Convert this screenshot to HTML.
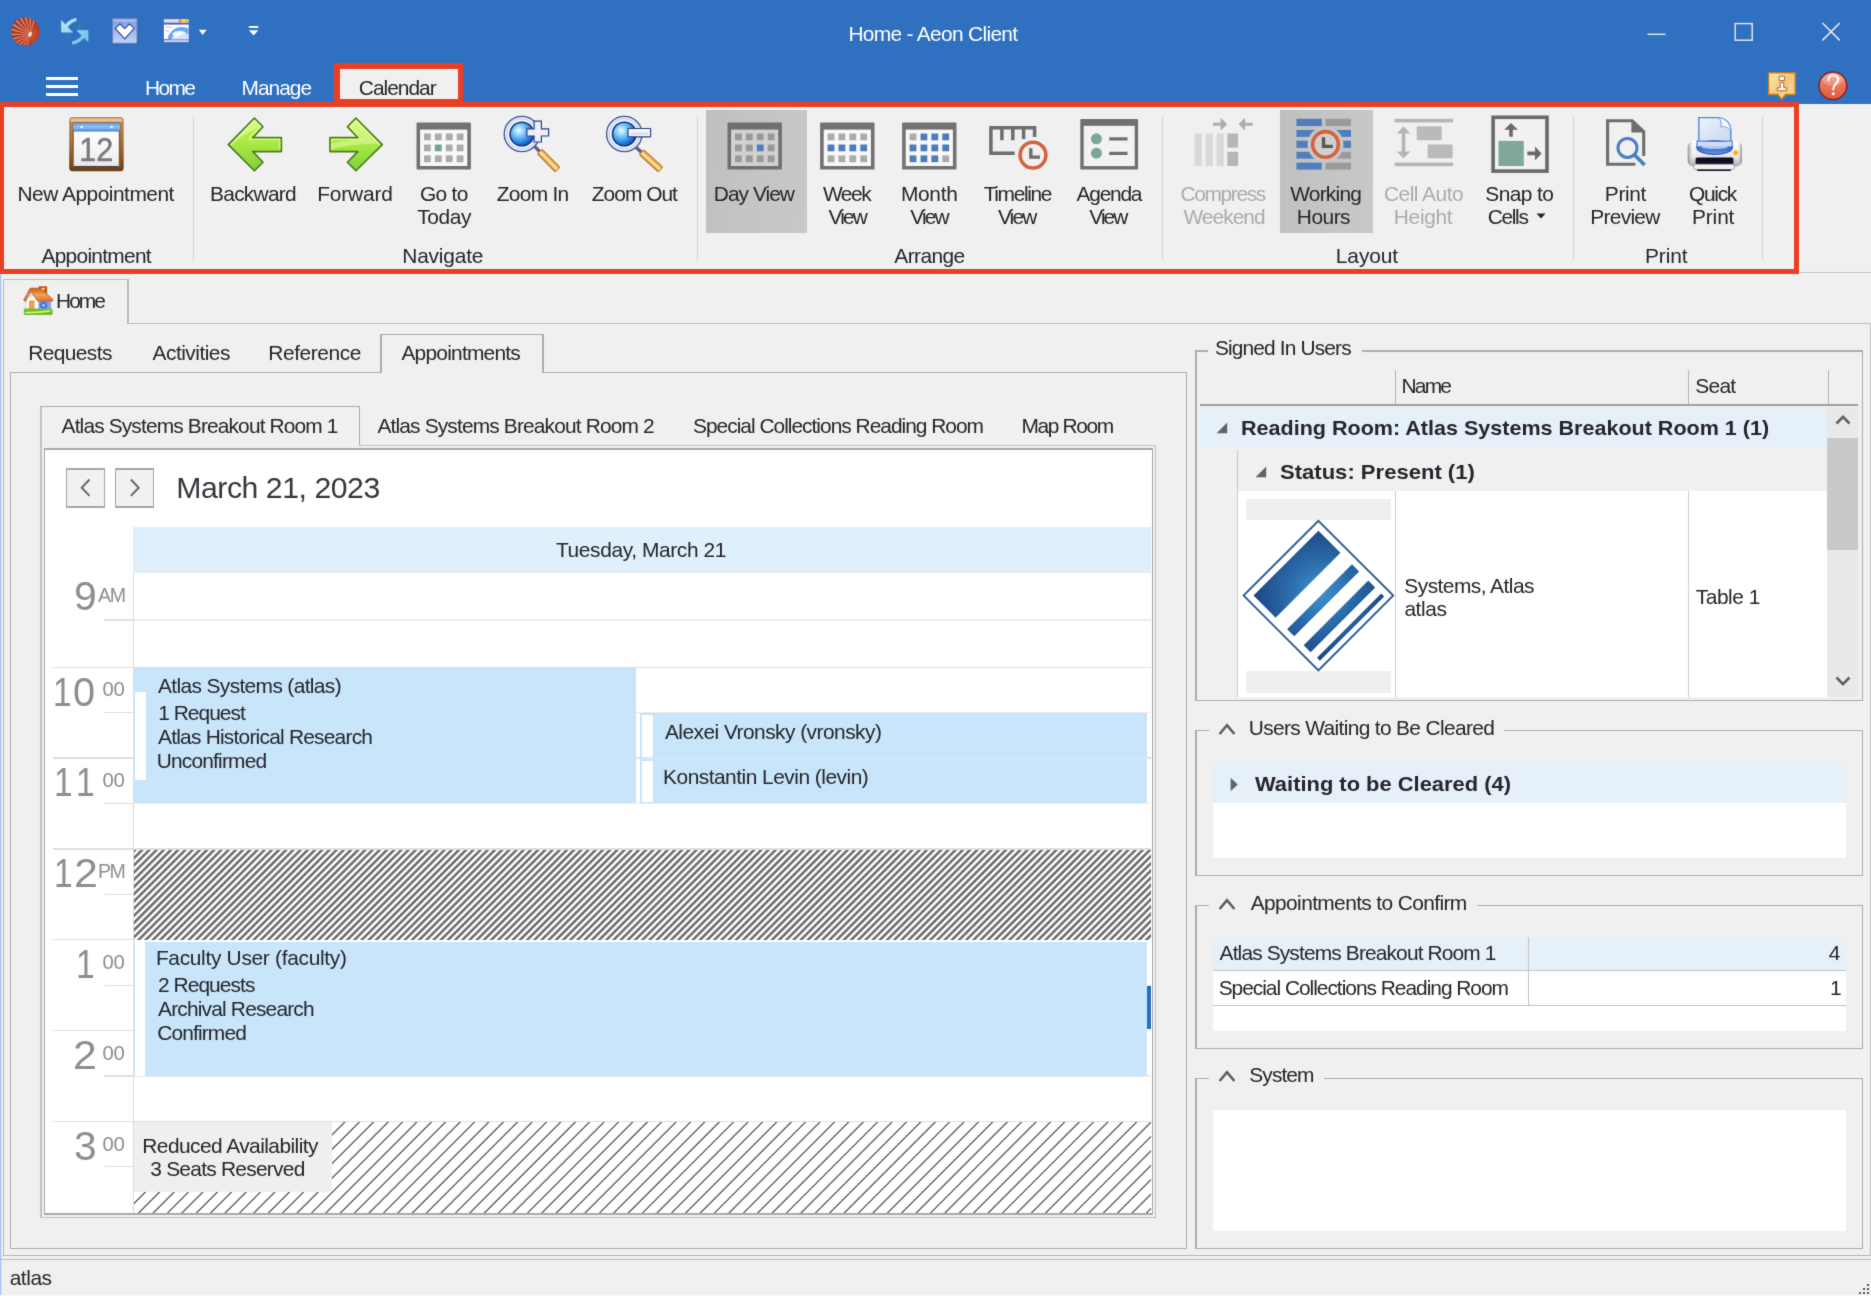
<!DOCTYPE html>
<html lang="en"><head><meta charset="utf-8"><title>Home - Aeon Client</title><style>
html,body{margin:0;padding:0;overflow:hidden}
body{width:1871px;height:1296px;overflow:hidden;position:relative;background:#F0F0F0;font-family:"Liberation Sans",sans-serif;color:#25252B}
#clip{position:absolute;left:0;top:0;width:1871px;height:1296px;overflow:hidden}
#wrap{position:absolute;left:-8px;top:-8px;width:1887px;height:1312px;background:#F0F0F0;filter:url(#soft)}
#pg{position:absolute;left:8px;top:8px;width:1871px;height:1296px}
.a{position:absolute;display:block}
.t{position:absolute;white-space:nowrap}
</style></head>
<body>
<svg width="0" height="0" style="position:absolute"><defs><filter id="soft" x="0" y="0" width="100%" height="100%" color-interpolation-filters="sRGB"><feConvolveMatrix order="3" kernelMatrix="0.0113 0.0838 0.0113 0.0838 0.6196 0.0838 0.0113 0.0838 0.0113" divisor="1" edgeMode="duplicate" preserveAlpha="true"/></filter></defs></svg>
<div id="clip"><div id="wrap"><div id="pg">
<div class="a" style="left:-8px;top:-8px;width:1887px;height:112px;background:#2F70C1;"></div>
<div class="t" style="left:848.39px;top:20.76px;font-size:20.9px;line-height:25px;letter-spacing:-0.67px;color:#FFFFFF;">Home - Aeon Client</div>
<svg class="a" style="left:1640px;top:15px" width="210" height="36" viewBox="0 0 210 36"><path d="M7.5 19.3H25.5" stroke="#E8EAEE" stroke-width="1.4" fill="none"/><rect x="95.2" y="8.6" width="17" height="16.6" stroke="#E8EAEE" stroke-width="1.4" fill="none"/><path d="M182.4 8L199.8 25.4M199.8 8L182.4 25.4" stroke="#E8EAEE" stroke-width="1.5" fill="none"/></svg>
<div class="a" style="left:45.7px;top:77.3px;width:32.5px;height:2.3px;background:#FFFFFF;"></div>
<div class="a" style="left:45.7px;top:85.4px;width:32.5px;height:2.3px;background:#FFFFFF;"></div>
<div class="a" style="left:45.7px;top:93.3px;width:32.5px;height:2.3px;background:#FFFFFF;"></div>
<div class="t" style="left:144.99px;top:75.16px;font-size:20.9px;line-height:25px;letter-spacing:-1.6px;color:#FFFFFF;">Home</div>
<div class="t" style="left:241.49px;top:75.16px;font-size:20.9px;line-height:25px;letter-spacing:-0.97px;color:#FFFFFF;">Manage</div>
<div class="a" style="left:-8px;top:104px;width:1887px;height:168px;background:#F0F0F0;"></div>
<div class="a" style="left:1799px;top:272px;width:80px;height:1px;background:#C6C6C6;"></div>
<div class="a" style="left:334.4px;top:63.4px;width:129.1px;height:43.9px;background:#E93F25;"></div>
<div class="a" style="left:339.6px;top:68.7px;width:118.9px;height:30.7px;background:#F0F0F0;"></div>
<div class="t" style="left:358.84px;top:75.16px;font-size:20.9px;line-height:25px;letter-spacing:-1px;">Calendar</div>
<div class="a" style="left:-8px;top:102.4px;width:1807.4px;height:172px;background:#E93F25;"></div>
<div class="a" style="left:4.3px;top:107.3px;width:1790.1px;height:162px;background:#F0F0F0;"></div>
<div class="a" style="left:705.7px;top:109.9px;width:101.8px;height:123.3px;background:linear-gradient(100deg,#BFBFBF 0%,#C4C4C4 45%,#C8C8C8 100%);"></div>
<div class="a" style="left:1280.3px;top:109.9px;width:92.3px;height:123.3px;background:linear-gradient(100deg,#BFBFBF 0%,#C4C4C4 45%,#C8C8C8 100%);"></div>
<div class="a" style="left:193px;top:115.5px;width:1.3px;height:145px;background:#D6D6D6;"></div>
<div class="a" style="left:696.7px;top:115.5px;width:1.3px;height:145px;background:#D6D6D6;"></div>
<div class="a" style="left:1161.8px;top:115.5px;width:1.3px;height:145px;background:#D6D6D6;"></div>
<div class="a" style="left:1572.8px;top:115.5px;width:1.3px;height:145px;background:#D6D6D6;"></div>
<div class="a" style="left:1761.9px;top:115.5px;width:1.3px;height:145px;background:#D6D6D6;"></div>
<div class="t" style="left:17.49px;top:180.76px;font-size:20.9px;line-height:25px;letter-spacing:-0.49px;">New Appointment</div>
<div class="t" style="left:210.09px;top:180.76px;font-size:20.9px;line-height:25px;letter-spacing:-0.74px;">Backward</div>
<div class="t" style="left:317.29px;top:180.76px;font-size:20.9px;line-height:25px;letter-spacing:-0.18px;">Forward</div>
<div class="t" style="left:419.95px;top:180.76px;font-size:20.9px;line-height:25px;letter-spacing:-0.67px;">Go to</div>
<div class="t" style="left:417.33px;top:204.46px;font-size:20.9px;line-height:25px;letter-spacing:-0.43px;">Today</div>
<div class="t" style="left:496.84px;top:180.76px;font-size:20.9px;line-height:25px;letter-spacing:-0.72px;">Zoom In</div>
<div class="t" style="left:591.84px;top:180.76px;font-size:20.9px;line-height:25px;letter-spacing:-0.98px;">Zoom Out</div>
<div class="t" style="left:713.79px;top:180.76px;font-size:20.9px;line-height:25px;letter-spacing:-0.96px;">Day View</div>
<div class="t" style="left:822.91px;top:180.76px;font-size:20.9px;line-height:25px;letter-spacing:-1.39px;">Week</div>
<div class="t" style="left:828.61px;top:204.46px;font-size:20.9px;line-height:25px;letter-spacing:-1.86px;">View</div>
<div class="t" style="left:900.89px;top:180.76px;font-size:20.9px;line-height:25px;letter-spacing:-0.27px;">Month</div>
<div class="t" style="left:910.21px;top:204.46px;font-size:20.9px;line-height:25px;letter-spacing:-1.86px;">View</div>
<div class="t" style="left:983.73px;top:180.76px;font-size:20.9px;line-height:25px;letter-spacing:-1.37px;">Timeline</div>
<div class="t" style="left:997.91px;top:204.46px;font-size:20.9px;line-height:25px;letter-spacing:-1.86px;">View</div>
<div class="t" style="left:1076.56px;top:180.76px;font-size:20.9px;line-height:25px;letter-spacing:-1.22px;">Agenda</div>
<div class="t" style="left:1089.31px;top:204.46px;font-size:20.9px;line-height:25px;letter-spacing:-1.96px;">View</div>
<div class="t" style="left:1180.44px;top:180.76px;font-size:20.9px;line-height:25px;letter-spacing:-1.33px;color:#ABABAB;">Compress</div>
<div class="t" style="left:1183.41px;top:204.46px;font-size:20.9px;line-height:25px;letter-spacing:-0.94px;color:#ABABAB;">Weekend</div>
<div class="t" style="left:1290.21px;top:180.76px;font-size:20.9px;line-height:25px;letter-spacing:-0.75px;">Working</div>
<div class="t" style="left:1296.79px;top:204.46px;font-size:20.9px;line-height:25px;letter-spacing:-0.49px;">Hours</div>
<div class="t" style="left:1383.94px;top:180.76px;font-size:20.9px;line-height:25px;letter-spacing:-0.5px;color:#ABABAB;">Cell Auto</div>
<div class="t" style="left:1393.79px;top:204.46px;font-size:20.9px;line-height:25px;letter-spacing:-0.3px;color:#ABABAB;">Height</div>
<div class="t" style="left:1485.35px;top:180.76px;font-size:20.9px;line-height:25px;letter-spacing:-0.58px;">Snap to</div>
<div class="t" style="left:1487.84px;top:204.46px;font-size:20.9px;line-height:25px;letter-spacing:-1.36px;">Cells</div>
<svg class="a" style="left:1536px;top:212.5px" width="10" height="6" viewBox="0 0 10 6"><path d="M0.5 0.5H9.5L5 5.5Z" fill="#222"/></svg>
<div class="t" style="left:1604.79px;top:180.76px;font-size:20.9px;line-height:25px;letter-spacing:-0.33px;">Print</div>
<div class="t" style="left:1590.19px;top:204.46px;font-size:20.9px;line-height:25px;letter-spacing:-0.69px;">Preview</div>
<div class="t" style="left:1688.91px;top:180.76px;font-size:20.9px;line-height:25px;letter-spacing:-1.26px;">Quick</div>
<div class="t" style="left:1691.99px;top:204.46px;font-size:20.9px;line-height:25px;letter-spacing:-0.13px;">Print</div>
<div class="t" style="left:41.46px;top:242.86px;font-size:20.9px;line-height:25px;letter-spacing:-0.71px;">Appointment</div>
<div class="t" style="left:402.29px;top:242.86px;font-size:20.9px;line-height:25px;letter-spacing:-0.19px;">Navigate</div>
<div class="t" style="left:894.36px;top:242.86px;font-size:20.9px;line-height:25px;letter-spacing:-0.59px;">Arrange</div>
<div class="t" style="left:1335.79px;top:242.86px;font-size:20.9px;line-height:25px;letter-spacing:-0.07px;">Layout</div>
<div class="t" style="left:1645.09px;top:242.86px;font-size:20.9px;line-height:25px;letter-spacing:-0.15px;">Print</div>
<div class="a" style="left:-8px;top:274.4px;width:9px;height:1029.6px;background:#A4C5EE;"></div>
<div class="a" style="left:1px;top:274.4px;width:1px;height:1029.6px;background:#DCE6F4;"></div>
<div class="a" style="left:128px;top:323px;width:1751px;height:1.4px;background:#BDBDBD;"></div>
<div class="a" style="left:2.6px;top:279px;width:1.3px;height:976.5px;background:#BDBDBD;"></div>
<div class="a" style="left:2.6px;top:279px;width:125.4px;height:1.3px;background:#BDBDBD;"></div>
<div class="a" style="left:127.4px;top:279px;width:1.3px;height:45.2px;background:#BDBDBD;"></div>
<div class="a" style="left:2.6px;top:1255px;width:1876.4px;height:1.4px;background:#B4B4B4;"></div>
<div class="a" style="left:1869.5px;top:323px;width:1.3px;height:933px;background:#BDBDBD;"></div>
<div class="t" style="left:55.99px;top:288.46px;font-size:20.9px;line-height:25px;letter-spacing:-1.93px;">Home</div>
<div class="t" style="left:28.29px;top:340.46px;font-size:20.9px;line-height:25px;letter-spacing:-0.6px;">Requests</div>
<div class="t" style="left:152.56px;top:340.46px;font-size:20.9px;line-height:25px;letter-spacing:-0.51px;">Activities</div>
<div class="t" style="left:268.29px;top:340.46px;font-size:20.9px;line-height:25px;letter-spacing:-0.42px;">Reference</div>
<div class="t" style="left:401.46px;top:340.46px;font-size:20.9px;line-height:25px;letter-spacing:-0.77px;">Appointments</div>
<div class="a" style="left:9.7px;top:372px;width:370.9px;height:1.3px;background:#ADADAD;"></div>
<div class="a" style="left:542.3px;top:372px;width:645.2px;height:1.3px;background:#ADADAD;"></div>
<div class="a" style="left:9.7px;top:372px;width:1.3px;height:877px;background:#ADADAD;"></div>
<div class="a" style="left:1186.2px;top:372px;width:1.3px;height:877px;background:#ADADAD;"></div>
<div class="a" style="left:9.7px;top:1248px;width:1177.8px;height:1.3px;background:#ADADAD;"></div>
<div class="a" style="left:380.3px;top:334px;width:1.3px;height:39px;background:#ADADAD;"></div>
<div class="a" style="left:380.3px;top:334px;width:163.2px;height:1.3px;background:#ADADAD;"></div>
<div class="a" style="left:542.3px;top:334px;width:1.3px;height:39px;background:#ADADAD;"></div>
<div class="t" style="left:61.56px;top:413.26px;font-size:20.9px;line-height:25px;letter-spacing:-0.85px;">Atlas Systems Breakout Room 1</div>
<div class="t" style="left:377.46px;top:413.26px;font-size:20.9px;line-height:25px;letter-spacing:-0.84px;">Atlas Systems Breakout Room 2</div>
<div class="t" style="left:693.05px;top:413.26px;font-size:20.9px;line-height:25px;letter-spacing:-0.99px;">Special Collections Reading Room</div>
<div class="t" style="left:1021.49px;top:413.26px;font-size:20.9px;line-height:25px;letter-spacing:-1.34px;">Map Room</div>
<div class="a" style="left:40.3px;top:405.7px;width:1.3px;height:812.3px;background:#C2C2C2;"></div>
<div class="a" style="left:40.3px;top:405.7px;width:319.7px;height:1.3px;background:#ADADAD;"></div>
<div class="a" style="left:358.8px;top:405.7px;width:1.3px;height:39.8px;background:#ADADAD;"></div>
<div class="a" style="left:358.8px;top:444.6px;width:797.4px;height:1.3px;background:#C2C2C2;"></div>
<div class="a" style="left:1154.9px;top:444.6px;width:1.3px;height:773.4px;background:#C2C2C2;"></div>
<div class="a" style="left:40.3px;top:1216.9px;width:1115.9px;height:1.3px;background:#C2C2C2;"></div>
<div class="a" style="left:43.6px;top:447.7px;width:1109.8px;height:767.1px;background:#A9A9A9;"></div>
<div class="a" style="left:45.3px;top:449.5px;width:1106.3px;height:763.6px;background:#FFFFFF;"></div>
<div class="a" style="left:65.9px;top:468.2px;width:39.4px;height:39.4px;background:#A6A6A6;"></div>
<div class="a" style="left:67.2px;top:469.5px;width:36.8px;height:36.8px;background:#F1F1F1;"></div>
<div class="a" style="left:114.9px;top:468.2px;width:39.4px;height:39.4px;background:#A6A6A6;"></div>
<div class="a" style="left:116.2px;top:469.5px;width:36.8px;height:36.8px;background:#F1F1F1;"></div>
<svg class="a" style="left:65.9px;top:468.2px" width="39.4" height="39.4" viewBox="0 0 39.4 39.4"><path d="M23.5 11.5L15.7 19.7L23.5 27.9" stroke="#6A6A6A" stroke-width="2" fill="none"/></svg>
<svg class="a" style="left:114.9px;top:468.2px" width="39.4" height="39.4" viewBox="0 0 39.4 39.4"><path d="M15.9 11.5L23.7 19.7L15.9 27.9" stroke="#6A6A6A" stroke-width="2" fill="none"/></svg>
<div class="t" style="left:176.32px;top:470.24px;font-size:30.2px;line-height:36px;letter-spacing:-0.45px;color:#36363C;">March 21, 2023</div>
<div class="a" style="left:133.2px;top:526.5px;width:1018px;height:46.3px;background:#DFEFFB;"></div>
<div class="t" style="left:556.03px;top:537.06px;font-size:20.9px;line-height:25px;letter-spacing:-0.38px;">Tuesday, March 21</div>
<div class="a" style="left:53px;top:666.7px;width:1098.4px;height:1.2px;background:#DFDFDF;"></div>
<div class="a" style="left:53px;top:757.4px;width:1098.4px;height:1.2px;background:#DFDFDF;"></div>
<div class="a" style="left:53px;top:848.4px;width:1098.4px;height:1.2px;background:#DFDFDF;"></div>
<div class="a" style="left:53px;top:939.3px;width:1098.4px;height:1.2px;background:#DFDFDF;"></div>
<div class="a" style="left:53px;top:1030px;width:1098.4px;height:1.2px;background:#DFDFDF;"></div>
<div class="a" style="left:53px;top:1120.8px;width:1098.4px;height:1.2px;background:#DFDFDF;"></div>
<div class="a" style="left:104.2px;top:619.4px;width:29px;height:1.25px;background:#DEDEDE;"></div>
<div class="a" style="left:133.2px;top:619.4px;width:1018.2px;height:1.3px;background:#ECECEC;"></div>
<div class="a" style="left:104.2px;top:712.2px;width:29px;height:1.25px;background:#DEDEDE;"></div>
<div class="a" style="left:133.2px;top:712.2px;width:1018.2px;height:1.3px;background:#ECECEC;"></div>
<div class="a" style="left:104.2px;top:802.7px;width:29px;height:1.25px;background:#DEDEDE;"></div>
<div class="a" style="left:133.2px;top:802.7px;width:1018.2px;height:1.3px;background:#ECECEC;"></div>
<div class="a" style="left:104.2px;top:893.5px;width:29px;height:1.25px;background:#DEDEDE;"></div>
<div class="a" style="left:133.2px;top:893.5px;width:1018.2px;height:1.3px;background:#ECECEC;"></div>
<div class="a" style="left:104.2px;top:984.7px;width:29px;height:1.25px;background:#DEDEDE;"></div>
<div class="a" style="left:133.2px;top:984.7px;width:1018.2px;height:1.3px;background:#ECECEC;"></div>
<div class="a" style="left:104.2px;top:1075.4px;width:29px;height:1.25px;background:#DEDEDE;"></div>
<div class="a" style="left:133.2px;top:1075.4px;width:1018.2px;height:1.3px;background:#ECECEC;"></div>
<div class="a" style="left:104.2px;top:1166.2px;width:29px;height:1.25px;background:#DEDEDE;"></div>
<div class="a" style="left:133.2px;top:1166.2px;width:1018.2px;height:1.3px;background:#ECECEC;"></div>
<div class="a" style="left:133.2px;top:572.8px;width:1.3px;height:640.3px;background:#DCDCDC;"></div>
<div class="t" style="left:73.78px;top:571.42px;font-size:41.5px;line-height:50px;transform:scaleX(0.9853);transform-origin:0 0;color:#8E8E8E;">9</div>
<div class="t" style="left:97.96px;top:583.41px;font-size:19.6px;line-height:24px;letter-spacing:-1.34px;color:#8E8E8E;">AM</div>
<div class="t" style="left:53.44px;top:666.52px;font-size:41.5px;line-height:50px;transform:scaleX(0.8098);transform-origin:0 0;color:#8E8E8E;">1</div>
<div class="t" style="left:73.25px;top:666.52px;font-size:41.5px;line-height:50px;transform:scaleX(0.9571);transform-origin:0 0;color:#8E8E8E;">0</div>
<div class="t" style="left:102.51px;top:677.47px;font-size:20.3px;line-height:24px;letter-spacing:-0.28px;color:#8E8E8E;">00</div>
<div class="t" style="left:53.84px;top:757.22px;font-size:41.5px;line-height:50px;transform:scaleX(0.8098);transform-origin:0 0;color:#8E8E8E;">1</div>
<div class="t" style="left:76.24px;top:757.22px;font-size:41.5px;line-height:50px;transform:scaleX(0.8098);transform-origin:0 0;color:#8E8E8E;">1</div>
<div class="t" style="left:102.51px;top:768.17px;font-size:20.3px;line-height:24px;letter-spacing:-0.28px;color:#8E8E8E;">00</div>
<div class="t" style="left:53.64px;top:848.22px;font-size:41.5px;line-height:50px;transform:scaleX(0.8098);transform-origin:0 0;color:#8E8E8E;">1</div>
<div class="t" style="left:73.84px;top:848.22px;font-size:41.5px;line-height:50px;transform:scaleX(1.0360);transform-origin:0 0;color:#8E8E8E;">2</div>
<div class="t" style="left:97.99px;top:859.41px;font-size:19.6px;line-height:24px;letter-spacing:-1.67px;color:#8E8E8E;">PM</div>
<div class="t" style="left:76.24px;top:939.12px;font-size:41.5px;line-height:50px;transform:scaleX(0.8098);transform-origin:0 0;color:#8E8E8E;">1</div>
<div class="t" style="left:102.51px;top:950.07px;font-size:20.3px;line-height:24px;letter-spacing:-0.28px;color:#8E8E8E;">00</div>
<div class="t" style="left:73.15px;top:1029.82px;font-size:41.5px;line-height:50px;transform:scaleX(1.0307);transform-origin:0 0;color:#8E8E8E;">2</div>
<div class="t" style="left:102.51px;top:1040.77px;font-size:20.3px;line-height:24px;letter-spacing:-0.28px;color:#8E8E8E;">00</div>
<div class="t" style="left:73.95px;top:1120.62px;font-size:41.5px;line-height:50px;transform:scaleX(0.9802);transform-origin:0 0;color:#8E8E8E;">3</div>
<div class="t" style="left:102.51px;top:1131.57px;font-size:20.3px;line-height:24px;letter-spacing:-0.28px;color:#8E8E8E;">00</div>
<div class="a" style="left:133.4px;top:668.3px;width:502.9px;height:135.1px;background:#C8E5FA;"></div>
<div class="a" style="left:134.8px;top:691.7px;width:10.8px;height:88.5px;background:#FFFFFF;"></div>
<div class="t" style="left:158.06px;top:673.16px;font-size:20.9px;line-height:25px;letter-spacing:-0.63px;">Atlas Systems (atlas)</div>
<div class="t" style="left:158.21px;top:700.26px;font-size:20.9px;line-height:25px;letter-spacing:-0.96px;">1 Request</div>
<div class="t" style="left:158.06px;top:723.96px;font-size:20.9px;line-height:25px;letter-spacing:-0.77px;">Atlas Historical Research</div>
<div class="t" style="left:156.69px;top:747.56px;font-size:20.9px;line-height:25px;letter-spacing:-0.8px;">Unconfirmed</div>
<div class="a" style="left:640.2px;top:713px;width:507.2px;height:44.7px;background:#C8E5FA;"></div>
<div class="a" style="left:642.3px;top:715.3px;width:10.4px;height:41.5px;background:#FFFFFF;"></div>
<div class="t" style="left:664.96px;top:718.56px;font-size:20.9px;line-height:25px;letter-spacing:-0.53px;">Alexei Vronsky (vronsky)</div>
<div class="a" style="left:640.2px;top:757.7px;width:507.2px;height:1.2px;background:#D9ECFB;"></div>
<div class="a" style="left:640.2px;top:758.9px;width:507.2px;height:44.5px;background:#C8E5FA;"></div>
<div class="a" style="left:642.3px;top:760.6px;width:10.4px;height:41px;background:#FFFFFF;"></div>
<div class="t" style="left:663.09px;top:763.96px;font-size:20.9px;line-height:25px;letter-spacing:-0.5px;">Konstantin Levin (levin)</div>
<div class="a" style="left:134.4px;top:849.6px;width:1017px;height:90.4px;background:repeating-linear-gradient(135deg,#6C6C6C 0,#6C6C6C 1.25px,#FFFFFF 2.55px,#FFFFFF 3.8px,#6C6C6C 5.09px);"></div>
<div class="a" style="left:133.4px;top:941.7px;width:1014px;height:134.8px;background:#C8E5FA;"></div>
<div class="a" style="left:134.8px;top:941.7px;width:10.6px;height:134.8px;background:#FFFFFF;"></div>
<div class="a" style="left:1146.6px;top:985.5px;width:4.8px;height:43.8px;background:#2C6CC0;"></div>
<div class="t" style="left:155.89px;top:945.26px;font-size:20.9px;line-height:25px;letter-spacing:-0.3px;">Faculty User (faculty)</div>
<div class="t" style="left:157.95px;top:972.26px;font-size:20.9px;line-height:25px;letter-spacing:-0.92px;">2 Requests</div>
<div class="t" style="left:158.06px;top:995.86px;font-size:20.9px;line-height:25px;letter-spacing:-0.81px;">Archival Research</div>
<div class="t" style="left:157.24px;top:1019.66px;font-size:20.9px;line-height:25px;letter-spacing:-0.85px;">Confirmed</div>
<div class="a" style="left:134.4px;top:1122.2px;width:1017px;height:90.9px;background:repeating-linear-gradient(135deg,#FFFFFF 0,#FFFFFF 5.6px,#727272 6.1px,#727272 7.15px,#FFFFFF 7.58px,#FFFFFF 10.18px);"></div>
<div class="a" style="left:134.4px;top:1122.2px;width:197.9px;height:70.1px;background:#EFEFEF;"></div>
<div class="t" style="left:142.29px;top:1132.76px;font-size:20.9px;line-height:25px;letter-spacing:-0.55px;">Reduced Availability</div>
<div class="t" style="left:150.2px;top:1156.46px;font-size:20.9px;line-height:25px;letter-spacing:-0.73px;">3 Seats Reserved</div>
<div class="a" style="left:1195.3px;top:350.4px;width:1.3px;height:351px;background:#ADADAD;"></div>
<div class="a" style="left:1862.1px;top:350.4px;width:1.3px;height:351px;background:#ADADAD;"></div>
<div class="a" style="left:1195.3px;top:700.1px;width:668.1px;height:1.3px;background:#ADADAD;"></div>
<div class="a" style="left:1195.3px;top:350.4px;width:13.2px;height:1.3px;background:#ADADAD;"></div>
<div class="a" style="left:1362px;top:350.4px;width:501.4px;height:1.3px;background:#ADADAD;"></div>
<div class="t" style="left:1214.95px;top:335.26px;font-size:20.9px;line-height:25px;letter-spacing:-0.85px;">Signed In Users</div>
<div class="a" style="left:1395.2px;top:369.6px;width:1.3px;height:35.4px;background:#B4B4B4;"></div>
<div class="a" style="left:1687.6px;top:369.6px;width:1.3px;height:35.4px;background:#B4B4B4;"></div>
<div class="a" style="left:1827.8px;top:369.6px;width:1.3px;height:35.4px;background:#B4B4B4;"></div>
<div class="a" style="left:1200.2px;top:404.2px;width:658.2px;height:1.6px;background:#A0A0A0;"></div>
<div class="t" style="left:1401.49px;top:373.46px;font-size:20.9px;line-height:25px;letter-spacing:-1.76px;">Name</div>
<div class="t" style="left:1695.35px;top:373.46px;font-size:20.9px;line-height:25px;letter-spacing:-0.76px;">Seat</div>
<div class="a" style="left:1200.2px;top:406.6px;width:627.1px;height:40.8px;background:#E6F0F9;"></div>
<svg class="a" style="left:1216.4px;top:422.2px" width="12" height="12" viewBox="0 0 12 12"><path d="M11.2 0.6V11.2H0.6Z" fill="#636363"/></svg>
<div class="t" style="left:1241.16px;top:414.96px;font-size:20.6px;line-height:25px;transform:scaleX(1.0457);transform-origin:0 0;font-weight:bold;">Reading Room: Atlas Systems Breakout Room 1 (1)</div>
<div class="a" style="left:1237px;top:449.5px;width:1.3px;height:247.3px;background:#C9C9C9;"></div>
<svg class="a" style="left:1254.9px;top:465.8px" width="12" height="12" viewBox="0 0 12 12"><path d="M11.2 0.6V11.2H0.6Z" fill="#636363"/></svg>
<div class="t" style="left:1279.56px;top:458.56px;font-size:20.6px;line-height:25px;transform:scaleX(1.0707);transform-origin:0 0;font-weight:bold;">Status: Present (1)</div>
<div class="a" style="left:1238.3px;top:491.4px;width:589px;height:205.4px;background:#FFFFFF;"></div>
<div class="a" style="left:1395.2px;top:491.4px;width:1.3px;height:205.4px;background:#D0D0D0;"></div>
<div class="a" style="left:1687.6px;top:491.4px;width:1.3px;height:205.4px;background:#D0D0D0;"></div>
<div class="a" style="left:1246px;top:498.8px;width:144.7px;height:21.7px;background:#EFEFEF;"></div>
<div class="a" style="left:1246px;top:670.8px;width:144.7px;height:22.4px;background:#EFEFEF;"></div>
<div class="t" style="left:1404.35px;top:572.96px;font-size:20.9px;line-height:25px;letter-spacing:-0.53px;">Systems, Atlas</div>
<div class="t" style="left:1404.41px;top:596.46px;font-size:20.9px;line-height:25px;letter-spacing:-0.4px;">atlas</div>
<div class="t" style="left:1695.83px;top:584.36px;font-size:20.9px;line-height:25px;letter-spacing:-0.48px;">Table 1</div>
<div class="a" style="left:1827.3px;top:406.6px;width:31.1px;height:290.2px;background:#E9E9E9;"></div>
<div class="a" style="left:1827.3px;top:437.6px;width:31.1px;height:112.8px;background:#C9C9C9;"></div>
<svg class="a" style="left:1835px;top:414px" width="16" height="12" viewBox="0 0 16 12"><path d="M1.5 9.5L8 2.8L14.5 9.5" stroke="#5F5F5F" stroke-width="2.6" fill="none"/></svg>
<svg class="a" style="left:1835px;top:675px" width="16" height="12" viewBox="0 0 16 12"><path d="M1.5 2.5L8 9.2L14.5 2.5" stroke="#5F5F5F" stroke-width="2.6" fill="none"/></svg>
<div class="a" style="left:1195.3px;top:730px;width:1.3px;height:146.2px;background:#ADADAD;"></div>
<div class="a" style="left:1862.1px;top:730px;width:1.3px;height:146.2px;background:#ADADAD;"></div>
<div class="a" style="left:1195.3px;top:874.9px;width:668.1px;height:1.3px;background:#ADADAD;"></div>
<div class="a" style="left:1195.3px;top:730px;width:13.4px;height:1.3px;background:#ADADAD;"></div>
<div class="a" style="left:1504.4px;top:730px;width:359px;height:1.3px;background:#ADADAD;"></div>
<svg class="a" style="left:1217.5px;top:721.8px" width="18" height="14" viewBox="0 0 18 14"><path d="M1.6 12L9 3.2L16.4 12" stroke="#5F5F5F" stroke-width="2.6" fill="none"/></svg>
<div class="t" style="left:1248.69px;top:715.46px;font-size:20.9px;line-height:25px;letter-spacing:-0.64px;">Users Waiting to Be Cleared</div>
<div class="a" style="left:1213px;top:762.3px;width:632.7px;height:95.9px;background:#FFFFFF;"></div>
<div class="a" style="left:1213px;top:762.3px;width:632.7px;height:40.9px;background:#E6F0F9;"></div>
<svg class="a" style="left:1230.4px;top:777px" width="9" height="15" viewBox="0 0 9 15"><path d="M0.6 0.8L7.8 7.5L0.6 14.2Z" fill="#636363"/></svg>
<div class="t" style="left:1255.38px;top:771.36px;font-size:20.6px;line-height:25px;transform:scaleX(1.0637);transform-origin:0 0;font-weight:bold;">Waiting to be Cleared (4)</div>
<div class="a" style="left:1195.3px;top:904.8px;width:1.3px;height:144.2px;background:#ADADAD;"></div>
<div class="a" style="left:1862.1px;top:904.8px;width:1.3px;height:144.2px;background:#ADADAD;"></div>
<div class="a" style="left:1195.3px;top:1047.7px;width:668.1px;height:1.3px;background:#ADADAD;"></div>
<div class="a" style="left:1195.3px;top:904.8px;width:13.4px;height:1.3px;background:#ADADAD;"></div>
<div class="a" style="left:1476.7px;top:904.8px;width:386.7px;height:1.3px;background:#ADADAD;"></div>
<svg class="a" style="left:1217.5px;top:896.6px" width="18" height="14" viewBox="0 0 18 14"><path d="M1.6 12L9 3.2L16.4 12" stroke="#5F5F5F" stroke-width="2.6" fill="none"/></svg>
<div class="t" style="left:1250.76px;top:889.96px;font-size:20.9px;line-height:25px;letter-spacing:-0.61px;">Appointments to Confirm</div>
<div class="a" style="left:1213px;top:937.2px;width:632.7px;height:94px;background:#FFFFFF;"></div>
<div class="a" style="left:1213px;top:937.2px;width:632.7px;height:32.8px;background:#E6F0F9;"></div>
<div class="a" style="left:1213px;top:970px;width:632.7px;height:1.4px;background:#C4C4C4;"></div>
<div class="a" style="left:1213px;top:1004.5px;width:632.7px;height:1.4px;background:#C4C4C4;"></div>
<div class="a" style="left:1528px;top:937.2px;width:1.3px;height:68.3px;background:#C4C4C4;"></div>
<div class="t" style="left:1219.56px;top:940.26px;font-size:20.9px;line-height:25px;letter-spacing:-0.85px;">Atlas Systems Breakout Room 1</div>
<div class="t" style="left:1218.65px;top:974.86px;font-size:20.9px;line-height:25px;letter-spacing:-1.01px;">Special Collections Reading Room</div>
<div class="t" style="left:1828.72px;top:940.26px;font-size:20.9px;line-height:25px;">4</div>
<div class="t" style="left:1829.91px;top:974.86px;font-size:20.9px;line-height:25px;">1</div>
<div class="a" style="left:1195.3px;top:1077.6px;width:1.3px;height:171.4px;background:#ADADAD;"></div>
<div class="a" style="left:1862.1px;top:1077.6px;width:1.3px;height:171.4px;background:#ADADAD;"></div>
<div class="a" style="left:1195.3px;top:1247.7px;width:668.1px;height:1.3px;background:#ADADAD;"></div>
<div class="a" style="left:1195.3px;top:1077.6px;width:13.4px;height:1.3px;background:#ADADAD;"></div>
<div class="a" style="left:1324px;top:1077.6px;width:539.4px;height:1.3px;background:#ADADAD;"></div>
<svg class="a" style="left:1217.5px;top:1069.4px" width="18" height="14" viewBox="0 0 18 14"><path d="M1.6 12L9 3.2L16.4 12" stroke="#5F5F5F" stroke-width="2.6" fill="none"/></svg>
<div class="t" style="left:1249.35px;top:1062.26px;font-size:20.9px;line-height:25px;letter-spacing:-0.91px;">System</div>
<div class="a" style="left:1213px;top:1110px;width:632.7px;height:121.4px;background:#FFFFFF;"></div>
<div class="a" style="left:-8px;top:1259px;width:1887px;height:1.3px;background:#BDBDBD;"></div>
<div class="t" style="left:9.71px;top:1264.96px;font-size:20.9px;line-height:25px;letter-spacing:-0.45px;">atlas</div>
<div class="a" style="left:-8px;top:1294.6px;width:1887px;height:9.4px;background:#FAFAFA;"></div>
<svg class="a" style="left:1858px;top:1283px" width="12" height="12" viewBox="0 0 12 12"><rect x="9" y="1" width="2" height="2" fill="#5A5A5A"/><rect x="5" y="5" width="2" height="2" fill="#5A5A5A"/><rect x="9" y="5" width="2" height="2" fill="#5A5A5A"/><rect x="1" y="9" width="2" height="2" fill="#5A5A5A"/><rect x="5" y="9" width="2" height="2" fill="#5A5A5A"/><rect x="9" y="9" width="2" height="2" fill="#5A5A5A"/></svg>
<svg class="a" style="left:0;top:0" width="1871" height="330" viewBox="0 0 1871 330"><defs><radialGradient id="gApp" cx="0.66" cy="0.6" r="0.75"><stop offset="0" stop-color="#CC5236"/><stop offset="0.5" stop-color="#B53E23"/><stop offset="1" stop-color="#A8361D"/></radialGradient><linearGradient id="gHeart" x1="0" y1="0" x2="0" y2="1"><stop offset="0" stop-color="#7C9BE6"/><stop offset="1" stop-color="#BFD3F8"/></linearGradient><linearGradient id="gBrown" x1="0" y1="0" x2="0" y2="1"><stop offset="0" stop-color="#B98F60"/><stop offset="0.5" stop-color="#A0703C"/><stop offset="1" stop-color="#6A3C14"/></linearGradient><linearGradient id="gCalBlue" x1="0" y1="0" x2="0" y2="1"><stop offset="0" stop-color="#5B9AE4"/><stop offset="0.45" stop-color="#8FBDF2"/><stop offset="0.8" stop-color="#6EA6E6"/><stop offset="1" stop-color="#3B78BE"/></linearGradient><linearGradient id="gPage" x1="0" y1="0" x2="0" y2="1"><stop offset="0" stop-color="#FFFFFF"/><stop offset="0.8" stop-color="#F0F0F0"/><stop offset="1" stop-color="#E4E4E4"/></linearGradient><linearGradient id="gGreen" x1="0" y1="0" x2="0" y2="1"><stop offset="0" stop-color="#C9F452"/><stop offset="0.5" stop-color="#A9E844"/><stop offset="1" stop-color="#7ED03A"/></linearGradient><radialGradient id="gLens" cx="0.36" cy="0.34" r="0.75"><stop offset="0" stop-color="#F2FCFF"/><stop offset="0.3" stop-color="#8AD2FA"/><stop offset="0.7" stop-color="#2E8CE6"/><stop offset="1" stop-color="#0F4AA8"/></radialGradient><linearGradient id="gHandle" x1="0" y1="0" x2="1" y2="0"><stop offset="0" stop-color="#C8771A"/><stop offset="0.45" stop-color="#FFE9B0"/><stop offset="1" stop-color="#E08A1E"/></linearGradient><linearGradient id="gInfo" x1="0" y1="0" x2="1" y2="1"><stop offset="0" stop-color="#FFF0B8"/><stop offset="0.5" stop-color="#F3C67E"/><stop offset="1" stop-color="#F8DA9A"/></linearGradient><linearGradient id="gHelp" x1="0" y1="0" x2="0" y2="1"><stop offset="0" stop-color="#F4A48E"/><stop offset="0.5" stop-color="#E9755A"/><stop offset="1" stop-color="#E0573A"/></linearGradient><linearGradient id="gPaper" x1="0" y1="0" x2="1" y2="1"><stop offset="0" stop-color="#EEF3FB"/><stop offset="1" stop-color="#C6D6EE"/></linearGradient><linearGradient id="gPrn" x1="0" y1="0" x2="0" y2="1"><stop offset="0" stop-color="#FFFFFF"/><stop offset="0.6" stop-color="#E6E6E6"/><stop offset="1" stop-color="#9A9A9A"/></linearGradient><linearGradient id="gTray" x1="0" y1="0" x2="0" y2="1"><stop offset="0" stop-color="#6F9FE6"/><stop offset="0.45" stop-color="#2C62C8"/><stop offset="1" stop-color="#6C9CE4"/></linearGradient><linearGradient id="gRoof" x1="0" y1="0" x2="0" y2="1"><stop offset="0" stop-color="#C95A1A"/><stop offset="0.5" stop-color="#F2A25A"/><stop offset="1" stop-color="#D9702A"/></linearGradient><linearGradient id="gRefresh" gradientUnits="userSpaceOnUse" x1="61" y1="19" x2="88" y2="44"><stop offset="0" stop-color="#BFEAFB"/><stop offset="1" stop-color="#62BCE8"/></linearGradient><linearGradient id="gPrnSide" x1="0" y1="0" x2="1" y2="0"><stop offset="0" stop-color="#6E6E6E" stop-opacity="0.75"/><stop offset="0.1" stop-color="#FFFFFF" stop-opacity="0.2"/><stop offset="0.22" stop-color="#FFFFFF" stop-opacity="0"/><stop offset="0.8" stop-color="#FFFFFF" stop-opacity="0"/><stop offset="0.92" stop-color="#FFFFFF" stop-opacity="0.2"/><stop offset="1" stop-color="#6E6E6E" stop-opacity="0.75"/></linearGradient><clipPath id="cApp"><circle cx="25.4" cy="31.6" r="14"/></clipPath><filter id="fB" x="-20%" y="-20%" width="140%" height="140%"><feGaussianBlur stdDeviation="0.45"/></filter><clipPath id="cWin"><rect x="163.9" y="24.6" width="24.8" height="14.6"/></clipPath><clipPath id="cArr1"><path d="M228.3 144.6L254.4 118L263 126.8L252.8 137.6L281.4 137.6L281.4 151.6L252.8 151.6L263 162.2L254.4 170.8Z"/></clipPath><clipPath id="cArr2"><path d="M382.3 144.6L355.9 118L347.4 126.8L357.8 137.6L330 137.6L330 151.6L357.8 151.6L347.4 162.2L355.9 170.8Z"/></clipPath></defs><circle cx="25.4" cy="31.6" r="14.2" fill="url(#gApp)"/><path d="M30.2 34.4L24.62 59.79L22.34 59.18ZM30.2 34.4L18.23 57.48L16.19 56.3ZM30.2 34.4L12.67 53.6L11 51.93ZM30.2 34.4L8.3 48.41L7.12 46.37ZM30.2 34.4L5.42 42.26L4.81 39.98ZM30.2 34.4L4.23 35.58L4.23 33.22ZM30.2 34.4L4.81 28.82L5.42 26.54ZM30.2 34.4L7.12 22.43L8.3 20.39ZM30.2 34.4L11 16.87L12.67 15.2ZM30.2 34.4L16.19 12.5L18.23 11.32ZM30.2 34.4L22.34 9.62L24.62 9.01ZM30.2 34.4L29.02 8.43L31.38 8.43ZM30.2 34.4L35.78 9.01L38.06 9.62Z" fill="#F6C3B2" clip-path="url(#cApp)" opacity="0.62" filter="url(#fB)"/><ellipse cx="30.1" cy="34.3" rx="1.5" ry="2.7" fill="#FFF1EA" transform="rotate(22 30.1 34.3)" filter="url(#fB)"/><path d="M77.6 24.6C79.6 26.4 80.4 28.6 80.2 30.4M70.2 38.2C68.6 36.6 68 34.6 68.4 32.8" fill="none" stroke="#2F86B0" stroke-width="2.2" opacity="0.8"/><path d="M64.6 29.4C66.6 24.4 70.6 20.8 76.4 19.4" fill="none" stroke="url(#gRefresh)" stroke-width="3.4"/><path d="M61.4 20.4V32.2H72.6Z" fill="url(#gRefresh)" stroke="#A6E0F7" stroke-width="0.5"/><path d="M84.8 33.2C82.8 38.2 78.4 42 72.2 43.2" fill="none" stroke="url(#gRefresh)" stroke-width="3.4"/><path d="M88 41.4V30.4H76.8Z" fill="url(#gRefresh)" stroke="#A6E0F7" stroke-width="0.5"/><rect x="112.6" y="18.8" width="25.7" height="25.7" fill="#3C4A7A" rx="1" opacity="0.55"/><rect x="111.9" y="18.1" width="25.8" height="25.8" fill="#6C80BC" rx="1"/><rect x="113.1" y="19.3" width="23.4" height="23.4" fill="url(#gHeart)"/><rect x="113.1" y="19.3" width="23.4" height="2.3" fill="#B4C6F4" opacity="0.8"/><path d="M115.2 28.4L119.9 23.9L124.7 28.6L129.5 23.9L134.3 28.4L124.7 38.8Z" fill="#FFFFFF" stroke="#2C3F94" stroke-width="1.1" stroke-linejoin="round"/><rect x="162.8" y="18.1" width="27" height="25.1" fill="#4F66B2" rx="1"/><rect x="163.9" y="19.2" width="24.8" height="3.4" fill="#DCE3F6"/><rect x="178.6" y="19.2" width="3" height="3.4" fill="#E8806A"/><rect x="181.9" y="19.2" width="3" height="3.4" fill="#E9D83A"/><rect x="185.2" y="19.2" width="3" height="3.4" fill="#B6D832"/><rect x="163.9" y="24.6" width="24.8" height="14.6" fill="#FFFFFF"/><circle cx="182" cy="42" r="15" fill="#6EA5F2" clip-path="url(#cWin)"/><circle cx="181.5" cy="42.5" r="10.5" fill="#CFE3FC" clip-path="url(#cWin)"/><path d="M172 34C175 30.5 181 29.5 186 32.5C183 33 179 36.5 176 38Z" fill="#FFFFFF" clip-path="url(#cWin)" opacity="0.85"/><rect x="165.8" y="26.6" width="6.8" height="1.4" fill="#C9D3EA"/><rect x="165.8" y="30" width="3.2" height="1.4" fill="#C9D3EA"/><rect x="163.9" y="40.2" width="24.8" height="1.9" fill="#CBD8F7"/><path d="M198.8 29.8H206.6L202.7 34.9Z" fill="#FFFFFF"/><rect x="248.9" y="26" width="9.4" height="1.9" fill="#FFFFFF"/><path d="M248.9 30.2H258.3L253.6 35.6Z" fill="#FFFFFF"/><path d="M1768.6 72.7H1795.2V94.5H1785.6L1781.7 99.4L1777.8 94.5H1768.6Z" fill="url(#gInfo)" stroke="#C67C1C" stroke-width="1.4" stroke-linejoin="round"/><path d="M1779.2 76.2H1784.6V80.6H1779.2ZM1780.2 82.6H1783.8V87.8H1786.6V90.8H1777.4V87.8H1780.2Z" fill="#FFFFFF" stroke="#A96A2A" stroke-width="1"/><circle cx="1832.9" cy="85.8" r="13.8" fill="url(#gHelp)" stroke="#8E1C14" stroke-width="1.4"/><ellipse cx="1832.9" cy="79.5" rx="10.5" ry="6.5" fill="#FFFFFF" opacity="0.18"/><path d="M1828.4 80.4C1828.6 76.6 1831 75.2 1833.4 75.2C1836.4 75.2 1838.2 77.2 1838.2 79.6C1838.2 83.2 1833.2 84.4 1833.2 89.4" fill="none" stroke="#FFFFFF" stroke-width="2.1" stroke-linecap="round"/><circle cx="1833.2" cy="93.8" r="1.5" fill="#FFFFFF"/><rect x="69.2" y="117" width="54.5" height="54.3" fill="url(#gBrown)" rx="3.5"/><rect x="70.6" y="118.6" width="51.7" height="3.2" fill="#EEC08E" rx="1.5"/><rect x="72.6" y="122.2" width="47.8" height="45.4" fill="#8A5A28" rx="2"/><rect x="73.8" y="131" width="45" height="35.4" fill="url(#gPage)"/><rect x="73" y="122.7" width="47" height="8.7" fill="url(#gCalBlue)" rx="1.5"/><rect x="73.8" y="166" width="45" height="1.3" fill="#3F3F3F"/><circle cx="81.6" cy="127" r="1.3" fill="#FFFFFF"/><circle cx="111.6" cy="127" r="1.3" fill="#FFFFFF"/><text x="79.2" y="160.5" font-family="Liberation Sans,sans-serif" font-size="33.4" textLength="34" lengthAdjust="spacingAndGlyphs" fill="#7B7B7B" stroke="#7B7B7B" stroke-width="0.5">12</text><path d="M228.3 144.6L254.4 118L263 126.8L252.8 137.6L281.4 137.6L281.4 151.6L252.8 151.6L263 162.2L254.4 170.8Z" fill="url(#gGreen)"/><path d="M226 146C236 142 246 131 262 127L256 112L222 140Z" fill="#F4FFC4" clip-path="url(#cArr1)" opacity="0.42"/><path d="M228.3 144.6L254.4 118L263 126.8L252.8 137.6L281.4 137.6L281.4 151.6L252.8 151.6L263 162.2L254.4 170.8Z" fill="none" stroke="#4B7A1E" stroke-width="1.6" stroke-linejoin="round"/><path d="M231.2 144.6L254.4 120.8L260.2 126.8L249 138.4M249 139.4H279.8V149.8" fill="none" stroke="#E6FFA6" stroke-width="1.1" opacity="0.8" stroke-linejoin="round"/><path d="M382.3 144.6L355.9 118L347.4 126.8L357.8 137.6L330 137.6L330 151.6L357.8 151.6L347.4 162.2L355.9 170.8Z" fill="url(#gGreen)"/><path d="M328 146C338 140 352 141 362 138L348 126L356 114L386 144C376 142 340 146 328 150Z" fill="#F4FFC4" clip-path="url(#cArr2)" opacity="0.42"/><path d="M382.3 144.6L355.9 118L347.4 126.8L357.8 137.6L330 137.6L330 151.6L357.8 151.6L347.4 162.2L355.9 170.8Z" fill="none" stroke="#4B7A1E" stroke-width="1.6" stroke-linejoin="round"/><path d="M331.8 149.8V139.4H361.4L350.2 126.8L355.9 120.8L379.4 144.6" fill="none" stroke="#E6FFA6" stroke-width="1.1" opacity="0.8" stroke-linejoin="round"/><rect x="416.5" y="122.4" width="54.4" height="47.2" fill="#727272" rx="1.2"/><rect x="420.1" y="129.6" width="47.2" height="36.4" fill="#F8F8F8"/><rect x="424" y="133.5" width="6.8" height="6.8" fill="#ABABAB"/><rect x="434.9" y="133.5" width="6.8" height="6.8" fill="#ABABAB"/><rect x="445.8" y="133.5" width="6.8" height="6.8" fill="#ABABAB"/><rect x="456.7" y="133.5" width="6.8" height="6.8" fill="#ABABAB"/><rect x="424" y="144.5" width="6.8" height="6.8" fill="#ABABAB"/><rect x="434.9" y="144.5" width="6.8" height="6.8" fill="#6FA58C"/><rect x="445.8" y="144.5" width="6.8" height="6.8" fill="#ABABAB"/><rect x="456.7" y="144.5" width="6.8" height="6.8" fill="#ABABAB"/><rect x="424" y="155.4" width="6.8" height="6.8" fill="#ABABAB"/><rect x="434.9" y="155.4" width="6.8" height="6.8" fill="#ABABAB"/><rect x="445.8" y="155.4" width="6.8" height="6.8" fill="#ABABAB"/><rect x="456.7" y="155.4" width="6.8" height="6.8" fill="#ABABAB"/><rect x="727.5" y="122.4" width="54.4" height="47.2" fill="#6F6F6F" rx="1.2"/><rect x="731.1" y="129.6" width="47.2" height="36.4" fill="#D1D1D1"/><rect x="735" y="133.5" width="6.8" height="6.8" fill="#999999"/><rect x="745.9" y="133.5" width="6.8" height="6.8" fill="#999999"/><rect x="756.8" y="133.5" width="6.8" height="6.8" fill="#999999"/><rect x="767.7" y="133.5" width="6.8" height="6.8" fill="#999999"/><rect x="735" y="144.5" width="6.8" height="6.8" fill="#999999"/><rect x="745.9" y="144.5" width="6.8" height="6.8" fill="#999999"/><rect x="756.8" y="144.5" width="6.8" height="6.8" fill="#4A7EC4"/><rect x="767.7" y="144.5" width="6.8" height="6.8" fill="#999999"/><rect x="735" y="155.4" width="6.8" height="6.8" fill="#999999"/><rect x="745.9" y="155.4" width="6.8" height="6.8" fill="#999999"/><rect x="756.8" y="155.4" width="6.8" height="6.8" fill="#999999"/><rect x="767.7" y="155.4" width="6.8" height="6.8" fill="#999999"/><rect x="820.1" y="122.4" width="54.4" height="47.2" fill="#727272" rx="1.2"/><rect x="823.7" y="129.6" width="47.2" height="36.4" fill="#F8F8F8"/><rect x="827.6" y="133.5" width="6.8" height="6.8" fill="#ABABAB"/><rect x="838.5" y="133.5" width="6.8" height="6.8" fill="#ABABAB"/><rect x="849.4" y="133.5" width="6.8" height="6.8" fill="#ABABAB"/><rect x="860.3" y="133.5" width="6.8" height="6.8" fill="#ABABAB"/><rect x="827.6" y="144.5" width="6.8" height="6.8" fill="#4B7CBC"/><rect x="838.5" y="144.5" width="6.8" height="6.8" fill="#4B7CBC"/><rect x="849.4" y="144.5" width="6.8" height="6.8" fill="#4B7CBC"/><rect x="860.3" y="144.5" width="6.8" height="6.8" fill="#4B7CBC"/><rect x="827.6" y="155.4" width="6.8" height="6.8" fill="#ABABAB"/><rect x="838.5" y="155.4" width="6.8" height="6.8" fill="#ABABAB"/><rect x="849.4" y="155.4" width="6.8" height="6.8" fill="#ABABAB"/><rect x="860.3" y="155.4" width="6.8" height="6.8" fill="#ABABAB"/><rect x="902.1" y="122.4" width="54.4" height="47.2" fill="#727272" rx="1.2"/><rect x="905.7" y="129.6" width="47.2" height="36.4" fill="#F8F8F8"/><rect x="909.6" y="133.5" width="6.8" height="6.8" fill="#ABABAB"/><rect x="920.5" y="133.5" width="6.8" height="6.8" fill="#4B7CBC"/><rect x="931.4" y="133.5" width="6.8" height="6.8" fill="#4B7CBC"/><rect x="942.3" y="133.5" width="6.8" height="6.8" fill="#4B7CBC"/><rect x="909.6" y="144.5" width="6.8" height="6.8" fill="#4B7CBC"/><rect x="920.5" y="144.5" width="6.8" height="6.8" fill="#4B7CBC"/><rect x="931.4" y="144.5" width="6.8" height="6.8" fill="#4B7CBC"/><rect x="942.3" y="144.5" width="6.8" height="6.8" fill="#4B7CBC"/><rect x="909.6" y="155.4" width="6.8" height="6.8" fill="#4B7CBC"/><rect x="920.5" y="155.4" width="6.8" height="6.8" fill="#4B7CBC"/><rect x="931.4" y="155.4" width="6.8" height="6.8" fill="#4B7CBC"/><rect x="942.3" y="155.4" width="6.8" height="6.8" fill="#ABABAB"/><g transform="translate(539.6 151.4) rotate(-44.68)"><rect x="-1.7" y="-7" width="3.4" height="8" fill="#5A6478"/><rect x="-3.4" y="0" width="6.8" height="25.6" rx="1.4" fill="url(#gHandle)" stroke="#B86A12" stroke-width="0.9"/></g><circle cx="521.9" cy="134" r="17.7" fill="#EEF2FA" stroke="#3F5298" stroke-width="1.3"/><circle cx="521.9" cy="134" r="15.2" fill="none" stroke="#CBD6EE" stroke-width="1.6"/><circle cx="521.9" cy="134" r="12.6" fill="#15398A"/><circle cx="521.9" cy="134" r="11" fill="url(#gLens)"/><path d="M534.1 121.2H541.4V128.8H548.6V136H541.4V142H534.1V136H526.9V128.8H534.1Z" fill="#EDEFF6" stroke="#2E3F90" stroke-width="1.2"/><g transform="translate(641.4 152.2) rotate(-47.82)"><rect x="-1.7" y="-7" width="3.4" height="8" fill="#5A6478"/><rect x="-3.4" y="0" width="6.8" height="25.91" rx="1.4" fill="url(#gHandle)" stroke="#B86A12" stroke-width="0.9"/></g><circle cx="624.3" cy="134" r="17.7" fill="#EEF2FA" stroke="#3F5298" stroke-width="1.3"/><circle cx="624.3" cy="134" r="15.2" fill="none" stroke="#CBD6EE" stroke-width="1.6"/><circle cx="624.3" cy="134" r="12.6" fill="#15398A"/><circle cx="624.3" cy="134" r="11" fill="url(#gLens)"/><rect x="628" y="128.5" width="22.6" height="8.3" fill="#F4F5F9" rx="0.6" stroke="#2E3F90" stroke-width="1.2"/><rect x="630.5" y="132.6" width="17.5" height="2" fill="#D8DAE4"/><path d="M1014.6 153.2H990.9V127.7H1034.6V137" fill="none" stroke="#6E6E6E" stroke-width="3.5"/><path d="M1001.9 127.7V140.3M1012.8 127.7V140.3M1023.6 127.7V139" fill="none" stroke="#6E6E6E" stroke-width="3.5"/><circle cx="1033" cy="155.1" r="14.7" fill="#F0F0F0"/><circle cx="1033" cy="155.1" r="12.9" fill="#F0F0F0" stroke="#D4633C" stroke-width="3.6"/><path d="M1030.8 148.2V157.1H1040" fill="none" stroke="#6E6E6E" stroke-width="3.4"/><rect x="1080.3" y="119.1" width="57.8" height="50.5" fill="#707070" rx="1.2"/><rect x="1083.7" y="125.8" width="51" height="40.3" fill="#F2F2F2"/><circle cx="1096.4" cy="138.8" r="5.5" fill="#7BA896"/><circle cx="1096.4" cy="153.2" r="5.5" fill="#7BA896"/><rect x="1109.2" y="137.3" width="18.3" height="3.2" fill="#6E6E6E"/><rect x="1109.2" y="151.8" width="18.3" height="3.2" fill="#6E6E6E"/><rect x="1194.6" y="133.5" width="7.2" height="32.7" fill="#D9D9D9"/><rect x="1205.7" y="133.5" width="7.2" height="32.7" fill="#D9D9D9"/><rect x="1216.6" y="133.5" width="7.2" height="32.7" fill="#D9D9D9"/><rect x="1227.3" y="133.5" width="10.8" height="14.1" fill="#B6B6B6"/><rect x="1227.3" y="151.8" width="10.8" height="14.2" fill="#B6B6B6"/><path d="M1212.9 122.7H1220.6V117.8L1227.2 124.2L1220.6 130.6V125.7H1212.9Z" fill="#ADADAD"/><path d="M1252.8 122.7H1245.1V117.8L1238.5 124.2L1245.1 130.6V125.7H1252.8Z" fill="#ADADAD"/><rect x="1296.4" y="118.8" width="25.4" height="7.3" fill="#4F7FBA"/><rect x="1325.5" y="118.8" width="25.5" height="7.3" fill="#9B9B9B"/><rect x="1296.4" y="129.9" width="54.6" height="7" fill="#4F7FBA"/><rect x="1296.4" y="140.7" width="54.6" height="7.2" fill="#4F7FBA"/><rect x="1296.4" y="151.8" width="28.6" height="6.9" fill="#4F7FBA"/><rect x="1325" y="151.8" width="26" height="6.9" fill="#9B9B9B"/><rect x="1296.4" y="162.6" width="25.4" height="7" fill="#4F7FBA"/><rect x="1325.5" y="162.6" width="25.5" height="7" fill="#9B9B9B"/><circle cx="1325.5" cy="144.4" r="18" fill="#C7C7C7"/><circle cx="1325.5" cy="144.4" r="12.8" fill="#CFCFCF" stroke="#D4633C" stroke-width="3.6"/><path d="M1323.5 137.2V146.4H1332.8" fill="none" stroke="#575757" stroke-width="3.3"/><rect x="1394.6" y="118.8" width="58.4" height="3.6" fill="#B5B5B5"/><rect x="1394.6" y="162.6" width="58.4" height="3.6" fill="#B5B5B5"/><rect x="1416.7" y="126.3" width="25.1" height="13.9" fill="#BABABA" rx="1.2"/><rect x="1427.6" y="144.4" width="25" height="13.8" fill="#BABABA" rx="1.2"/><path d="M1403.5 126.3L1410.2 133.4H1405.3V151.6H1410.2L1403.5 158.6L1396.8 151.6H1401.7V133.4H1396.8Z" fill="#B5B5B5"/><rect x="1493.1" y="117.3" width="53.9" height="53.8" fill="#F1F1F1" stroke="#6A6A6A" stroke-width="3.6"/><rect x="1498.5" y="140.9" width="25.3" height="25.1" fill="#7FA898"/><path d="M1511 122.9L1517.8 129.8H1512.8V136.8H1509.2V129.8H1504.2Z" fill="#6A6A6A"/><path d="M1541.6 153.4L1535 160.4V155.2H1527.4V151.6H1535V146.4Z" fill="#6A6A6A"/><path d="M1635.4 164.3H1607.6V120.8H1632.3L1643.7 131.6V156" fill="none" stroke="#6E6E6E" stroke-width="3.1"/><path d="M1631.4 120.8V132.4H1643.7Z" fill="#6E6E6E"/><circle cx="1627.5" cy="147.9" r="9.5" fill="#F0F0F0" stroke="#4A7EC0" stroke-width="3"/><path d="M1634.6 155L1644.6 165" fill="none" stroke="#4A7EC0" stroke-width="3.7"/><path d="M1698.8 117.6H1718.5C1726 118.6 1730.4 123.4 1730.8 131V142H1698.8Z" fill="url(#gPaper)" stroke="#5088DA" stroke-width="1.4"/><path d="M1718.5 117.6C1721 120 1721.6 123.6 1720.8 127C1724.4 126 1728.2 127.4 1730.8 131C1730.4 123.4 1726 118.6 1718.5 117.6Z" fill="#FBFCFF" stroke="#6F9CE0" stroke-width="1"/><rect x="1687.7" y="141" width="54.3" height="25.6" fill="url(#gPrn)" rx="6"/><rect x="1687.7" y="141" width="54.3" height="25.6" fill="url(#gPrnSide)" rx="6"/><ellipse cx="1714.6" cy="147.6" rx="17.8" ry="6.8" fill="url(#gTray)" stroke="#2C5EC0" stroke-width="1.2"/><rect x="1697" y="141.2" width="35.2" height="5.8" fill="#DDE8F8" opacity="0.9" stroke="#3E74D2" stroke-width="1.2"/><ellipse cx="1714.6" cy="147.2" rx="13" ry="1.9" fill="#CFE0FA" opacity="0.75"/><rect x="1695.6" y="157.4" width="37.8" height="7" fill="#0E0E24" rx="1.5"/><rect x="1693.6" y="164.2" width="40.8" height="5.4" fill="#F2F2F2" rx="2" stroke="#8E8E8E" stroke-width="0.8"/><rect x="1697" y="169.6" width="34" height="1.4" fill="#15151F" rx="0.7"/><circle cx="1735.8" cy="152.7" r="2.5" fill="#F6A81C" stroke="#FFE070" stroke-width="0.8"/><rect x="25.9" y="296" width="12.7" height="14.2" fill="#FFFFFF" stroke="#B7C5E4" stroke-width="0.9"/><rect x="38.6" y="300.4" width="12.3" height="9.8" fill="#86A4E0"/><rect x="29.4" y="300.9" width="4.7" height="9.1" fill="#F2A341" rx="0.5" stroke="#D88320" stroke-width="0.7"/><circle cx="43.6" cy="305.3" r="3.7" fill="#3F78E6"/><path d="M42.6 303.8L45.6 305.2L42.6 306.8Z" fill="#D6E4FF"/><rect x="38.6" y="286.3" width="8.6" height="8.7" fill="#C75A1C" rx="0.6"/><path d="M41 288.2H45L43.6 290.2V293H42.4V290.2Z" fill="#FBE3C8"/><path d="M23.6 300L30.2 288.2H40.4L52.8 299.4V301H37.6L31 291.6L25.6 301.4Z" fill="url(#gRoof)" stroke="#C4601E" stroke-width="0.9" stroke-linejoin="round"/><rect x="23.8" y="308.4" width="28.8" height="6.6" fill="#6FBA3C" rx="1.6"/><path d="M26 312.6C33 312.4 44 312.2 49.6 310.6" fill="none" stroke="#D7F552" stroke-width="1.7" stroke-linecap="round"/></svg>
<svg class="a" style="left:1241.8px;top:519.1px" width="153.2" height="153.2" viewBox="0 0 153.2 153.2"><defs><radialGradient id="gAtl" gradientUnits="userSpaceOnUse" cx="56" cy="52" r="62"><stop offset="0" stop-color="#3E92CE"/><stop offset="0.55" stop-color="#2A69A8"/><stop offset="1" stop-color="#1E4A86"/></radialGradient></defs><g transform="translate(1.6 76.6) rotate(-45)"><rect x="0" y="0" width="105.8" height="105.8" fill="#FFFFFF" stroke="#2F5C92" stroke-width="1.9"/><rect x="7" y="7" width="91.8" height="31.2" fill="url(#gAtl)"/><rect x="7" y="54.5" width="91.8" height="10.1" fill="url(#gAtl)"/><rect x="7.4" y="77.6" width="91.4" height="9.8" fill="url(#gAtl)"/><rect x="8" y="95.8" width="90.8" height="4.2" fill="url(#gAtl)"/></g></svg>
</div></div></div>
</body></html>
